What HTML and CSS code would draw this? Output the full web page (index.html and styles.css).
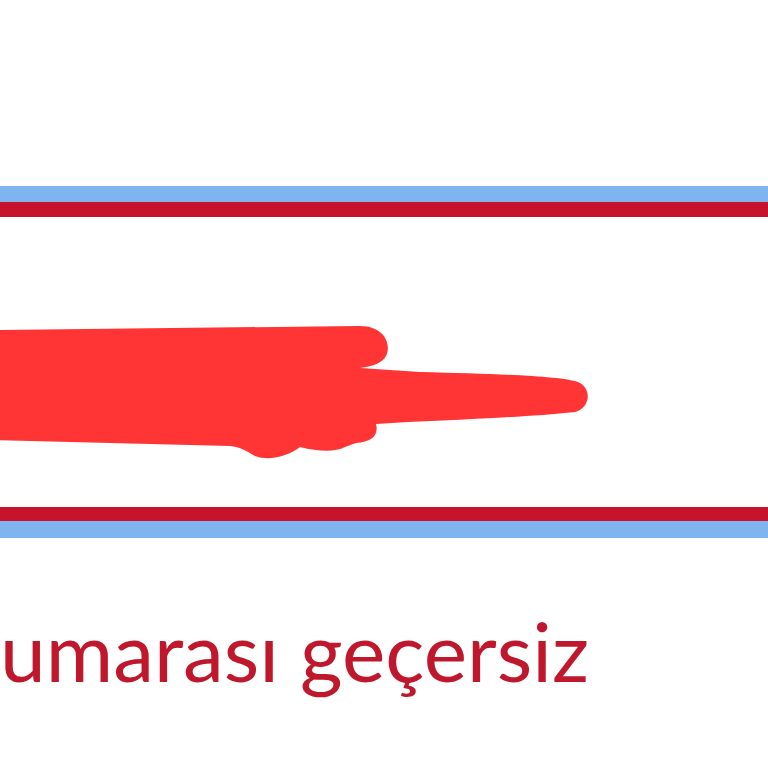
FILE: index.html
```html
<!DOCTYPE html>
<html lang="tr">
<head>
<meta charset="utf-8">
<title>Hata</title>
<link rel="stylesheet" href="styles.css">
</head>
<body>
<div class="page">
  <div class="field">
    <div class="field-inner">
      <svg class="redact" width="768" height="290" viewBox="0 217 768 290" aria-hidden="true">
        <path fill="#ff3535" d="M -10 330 L 358 326 C 384 325 392 344 386 356 C 382 363 374 366 360 368 L 420 372 C 500 374 560 376 578 382 C 592 388 591 407 575 412 C 520 418 440 420 376 424 C 379 435 372 442 356 443 L 345 447 C 335 452 320 452 300 447 C 290 455 270 462 255 456 C 245 450 240 447 230 446 L -10 440 Z"/>
      </svg>
    </div>
  </div>
  <p class="error">umarası geçersiz</p>
</div>
</body>
</html>
```
FILE: styles.css
```css
html, body {
  margin: 0;
  padding: 0;
  background: #ffffff;
  overflow: hidden;
}
.page {
  width: 768px;
  height: 768px;
  overflow: hidden;
  padding-top: 186px;
  box-sizing: border-box;
}
.field {
  margin: 0 -60px;
  border: 16px solid #7fb4ef;
  border-bottom-width: 17px;
}
.field-inner {
  border: 15px solid #c8132d;
  border-bottom-width: 14px;
  height: 290px;
  padding-left: 29px;
}
.redact {
  display: block;
}
.error {
  margin: 71px 0 0 0;
  font-family: Lato, "Noto Sans", sans-serif;
  font-size: 82px;
  line-height: 1;
  color: #bf182c;
  white-space: nowrap;
}
```
